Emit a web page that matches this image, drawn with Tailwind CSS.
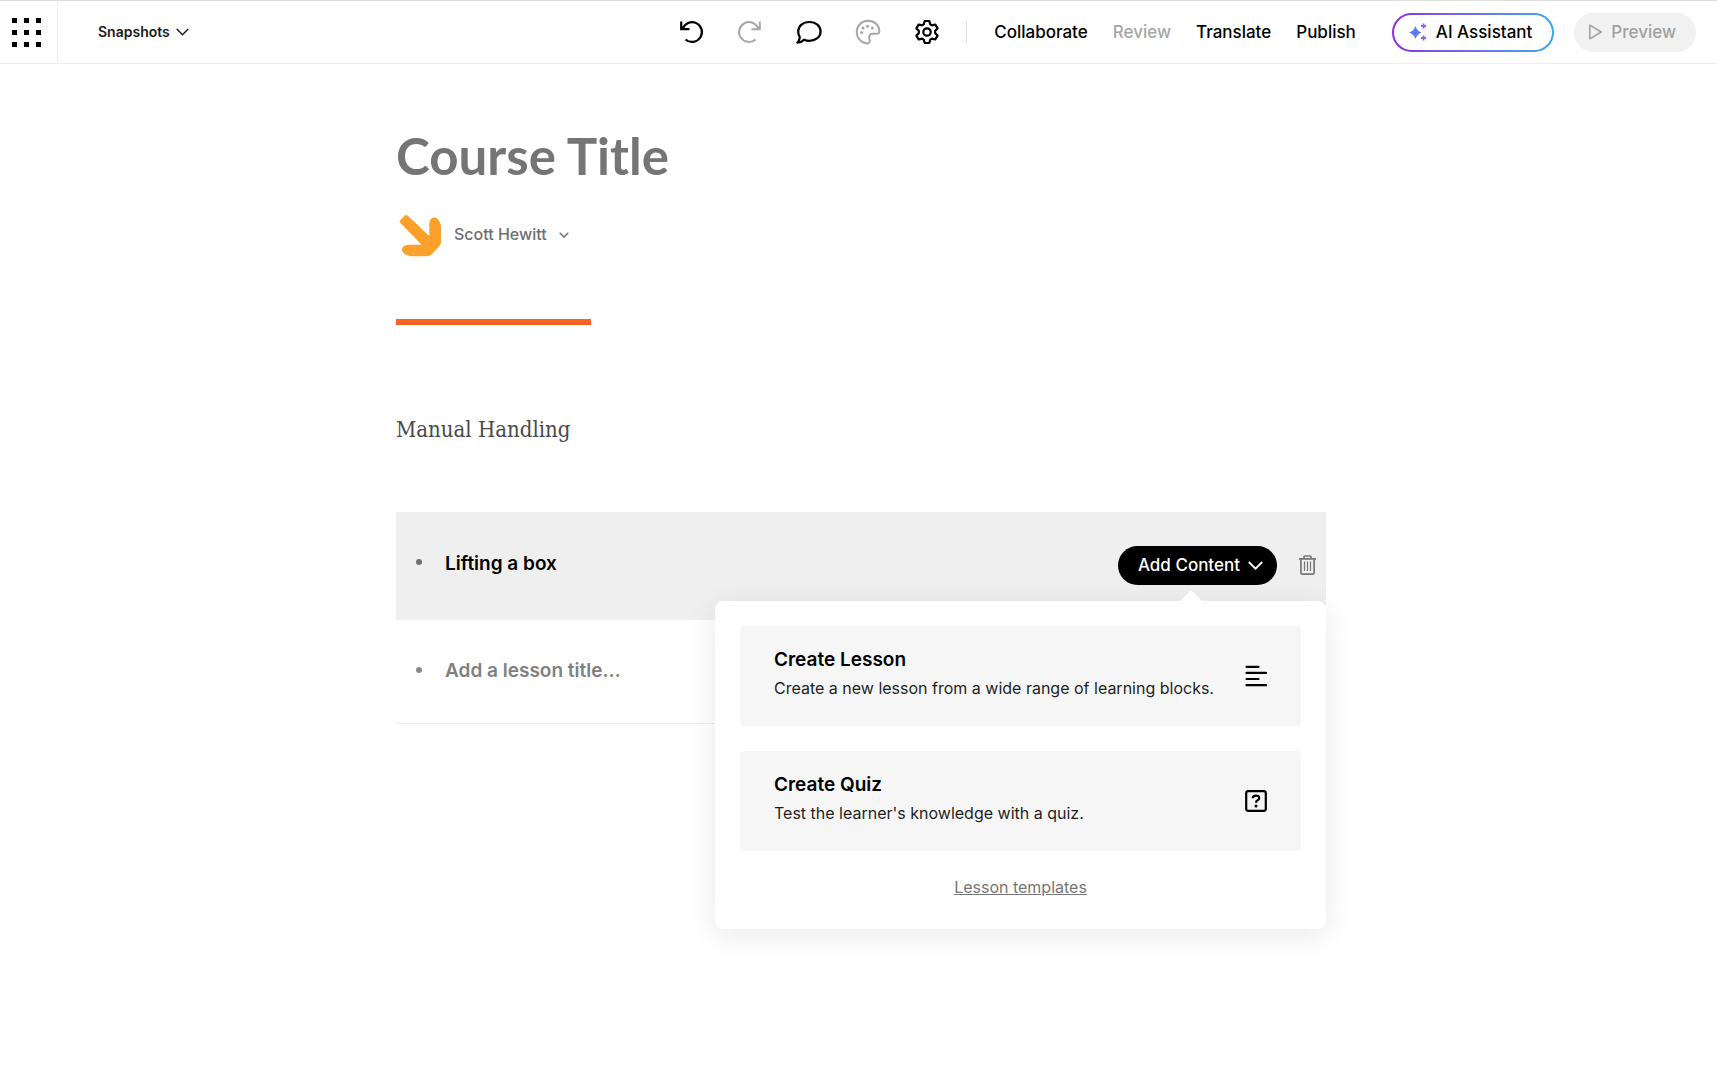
<!DOCTYPE html>
<html lang="en">
<head>
  <meta charset="UTF-8" />
  <meta name="viewport" content="width=device-width, initial-scale=1.0"/>
  <title>Course Title</title>
  <script src="https://cdn.jsdelivr.net/npm/@tailwindcss/browser@4"></script>
</head>
<body class="min-h-screen bg-white font-['Inter',sans-serif] text-black">
  <header class="flex h-16 items-center border-t border-b border-t-[#dcdcdc] border-b-[#ebebeb] pr-[21px]">
    <button type="button" aria-label="Apps" class="flex h-full w-[58px] shrink-0 items-center border-r border-[#ebebeb] pt-0.5 pl-3">
      <svg class="size-[30px]" viewBox="0 0 30 30" fill="#000" shape-rendering="crispEdges">
        <path d="M0 0h5v5H0zM12 0h5v5h-5zM24 0h5v5h-5zM0 12h5v5H0zM12 12h5v5h-5zM24 12h5v5h-5zM0 24h5v5H0zM12 24h5v5h-5zM24 24h5v5h-5z"/>
      </svg>
    </button>
    <button type="button" class="ml-10 flex items-center gap-1.5 text-sm font-semibold text-[#1a1a1a]">
      Snapshots
      <svg class="w-[13px]" viewBox="0 0 13 8" fill="none" stroke="currentColor" stroke-width="1.5"><path d="M.8 1l5.7 5.7L12.2 1"/></svg>
    </button>

    <div class="ml-auto flex items-center gap-[33px]">
      <button type="button" aria-label="Undo">
        <svg class="size-[26px]" viewBox="0 0 26 26" fill="none" stroke="currentColor" stroke-width="2.2"><path d="M3.200 2.500v7.700h8.200M4.600 10A9.900 9.900 0 1 1 7.500 20.500"/></svg>
      </button>
      <button type="button" aria-label="Redo" disabled class="text-[#a6a6a6]">
        <svg class="size-[26px]" viewBox="0 0 26 26" fill="none" stroke="currentColor" stroke-width="2"><path d="M22.800 2.500v7.700h-8.200M21.400 10A9.900 9.900 0 1 0 18.500 20.500"/></svg>
      </button>
      <button type="button" aria-label="Comments">
        <svg class="size-[26px]" viewBox="0 0 26 26" fill="none" stroke="currentColor" stroke-width="2.2" stroke-linejoin="round"><path d="M13.400 3c6.300 0 11.200 4 11.200 9.400s-4.900 9.400-11.200 9.400c-2 0-3.800-.4-5.400-1.100-1.800 1.900-4 2.900-6.600 3 1.500-1.600 2.300-3.400 2.400-5.600-1.100-1.600-1.600-3.400-1.600-5.700C2.200 7 7.100 3 13.400 3z"/></svg>
      </button>
      <button type="button" aria-label="Theme" disabled class="text-[#a6a6a6]">
        <svg class="size-[26px]" viewBox="0 0 26 26" fill="none" stroke="currentColor" stroke-width="2" stroke-linejoin="round"><path d="M13 1.700C6.700 1.700 1.700 6.700 1.700 13c0 5.500 3.900 10.300 9.100 11.300 2.700.5 4-.8 4-2.500 0-1.300-.6-2-.6-3.300 0-2.200 1.300-3.700 3.500-3.700h4c1.900 0 2.800-1 2.700-2.900C24 6 19.200 1.700 13 1.700z"/><g fill="currentColor" stroke="none"><circle cx="6.600" cy="13.400" r="1.500"/><circle cx="8" cy="8.900" r="1.500"/><circle cx="12.600" cy="7.200" r="1.500"/><circle cx="17.300" cy="8.900" r="1.500"/></g></svg>
      </button>
      <button type="button" aria-label="Settings">
        <svg class="size-[26px]" viewBox="0 0 26 26" fill="none" stroke="currentColor" stroke-width="2.200" stroke-linejoin="round"><path d="M10.700 2h4.600l.9 3.300 1.800 1.100 3.300-.9 2.300 3.900-2.400 2.400v2.400l2.400 2.400-2.300 3.900-3.300-.9-1.800 1.100-.9 3.300h-4.600l-.9-3.300L8 19.600l-3.300.9-2.300-3.900 2.400-2.400v-2.400L2.400 9.400l2.300-3.900 3.300.9 1.800-1.100z"/><circle cx="13" cy="13" r="3.700"/></svg>
      </button>
    </div>

    <nav class="ml-[26px] flex items-center text-[17px] font-medium">
      <span class="mr-[27px] h-6 w-px bg-[#e2e2e2]"></span>
      <div class="flex gap-[25px] pt-0.5">
        <button type="button">Collaborate</button>
        <button type="button" disabled class="text-[#a6a6a6]">Review</button>
        <button type="button">Translate</button>
        <button type="button">Publish</button>
      </div>
    </nav>

    <button type="button" class="ml-9 rounded-full bg-linear-to-r from-[#8a2be2] via-[#6a6fe8] to-[#35a7ec] p-0.5">
      <span class="flex h-[35px] items-center gap-[9px] rounded-full bg-white pr-5 pl-[15px] text-[17px] font-medium">
        <svg class="size-[18px]" viewBox="0 0 18 18">
          <path d="M6.500 3Q8 8 12.500 9.500 8 11 6.500 16 5 11 0 9.500 5 8 6.500 3z" fill="#5b7cf0"/>
          <path d="M14.500 .5v5M12 3h5M14.500 12.500v5M12 15h5" stroke="#8a63ea" stroke-width="1.800"/>
        </svg>
        <span class="pt-0.5">AI Assistant</span>
      </span>
    </button>
    <button type="button" disabled class="ml-5 flex h-[39px] items-center gap-[9px] rounded-full bg-[#f1f1f1] pr-5 pl-[15px] text-[17px] font-medium text-[#a0a0a0]">
      <svg class="h-4 w-[13px]" viewBox="0 0 13 16" fill="none" stroke="currentColor" stroke-width="1.500" stroke-linejoin="round"><path d="M.8 1.200v13.600L12.200 8z"/></svg>
      <span class="pt-0.5">Preview</span>
    </button>
  </header>

  <main class="pl-[5px]">
    <div class="mx-auto w-full max-w-[930px]">
      <input type="text" aria-label="Course title" placeholder="Course Title" class="mt-[59px] block h-[66px] w-full font-['Lato',sans-serif] text-[51px] font-bold outline-none placeholder:text-[#757575]">

      <button type="button" class="mt-[25px] flex items-center text-base font-medium text-[#6f6f6f]">
        <svg class="h-11 w-12" viewBox="0 0 48 44" fill="#faa02b"><path d="M4.300 8.800q-1.300-1.300 0-2.600l4.600-4.600q1.300-1.300 2.600 0L33.300 22V10.500C33.300 6 35.500 3.500 38.500 3.500 42 3.500 45 9 45 13v14c0 2.500-.5 4-2.500 6l-6.500 7c-2 1.800-3.500 2.300-6 2.300H17.500C12 42.300 6 39.500 6 35.800c0-3 2.500-4.800 6.500-5h13z"/></svg>
        <span class="ml-2.5 pb-1">Scott Hewitt</span>
        <svg class="mb-0.5 ml-3 w-2.5" viewBox="0 0 10 6" fill="none" stroke="currentColor" stroke-width="1.500"><path d="M.7.700L5 5 9.300.700"/></svg>
      </button>

      <div class="mt-[61px] h-1.5 w-[195px] bg-[#fa6423]"></div>

      <p class="mt-[87px] font-['DejaVu_Serif_Condensed','DejaVu_Serif',serif] text-[22px] leading-9 text-[#4a4a4a]">Manual Handling</p>

      <ul class="mt-16">
        <li class="relative flex h-[108px] items-center bg-[#efefef] pl-5">
          <span class="mb-2 size-1.5 rounded-full bg-[#707070]"></span>
          <input type="text" aria-label="Lesson title" value="Lifting a box" class="ml-[23px] min-w-0 flex-1 pb-1 text-[19px] font-semibold outline-none">
          <button type="button" class="mb-0.5 flex h-[39px] items-center gap-2 rounded-full bg-black pr-3.5 pl-5 text-[17px] font-medium text-white">
            <span class="pt-0.5">Add Content</span>
            <svg class="w-[15px]" viewBox="0 0 15 9" fill="none" stroke="currentColor" stroke-width="1.800"><path d="M.8 1l6.700 6.700L14.200 1"/></svg>
          </button>
          <button type="button" aria-label="Delete lesson" class="mr-2.5 mb-0.5 ml-[22px] text-[#777]">
            <svg class="h-5 w-[17px]" viewBox="0 0 17 20" fill="none" stroke="currentColor" stroke-width="1.700"><path d="M0 3.800h17M5 3.500V2q0-1 1-1h5q1 0 1 1v1.500M1.900 4v13.500q0 1.700 1.700 1.700h9.800q1.700 0 1.700-1.700V4"/><path stroke-width="1.200" d="M5.500 6.500v9.500M8.500 6.500v9.500M11.500 6.500v9.500"/></svg>
          </button>

          <!-- add content menu -->
          <div class="absolute top-[89px] right-0 z-10 w-[611px] rounded-lg bg-white px-[25px] pt-[25px] pb-[29px] shadow-[0_6px_30px_rgba(0,0,0,0.09)]">
            <svg class="absolute -top-[11px] right-[123px] h-3 w-6" viewBox="0 0 24 12" fill="#fff"><path d="M0 12L11 1q1-1 2 0l11 11z"/></svg>
            <div class="flex flex-col gap-[25px]">
              <button type="button" class="flex h-[100px] items-center justify-between rounded bg-[#f6f6f6] px-[34px] text-left">
                <span class="pb-1">
                  <span class="block text-[19px] leading-7 font-semibold">Create Lesson</span>
                  <span class="block text-base leading-7 text-[#1f1f1f]">Create a new lesson from a wide range of learning blocks.</span>
                </span>
                <svg class="size-[22px] shrink-0" viewBox="0 0 22 22" fill="none" stroke="#000" stroke-width="2.200" stroke-linecap="round"><path d="M1.500 1.800h12M1.500 7.900h19.500M1.500 14h12M1.500 20.200h19.500"/></svg>
              </button>
              <button type="button" class="flex h-[100px] items-center justify-between rounded bg-[#f6f6f6] px-[34px] text-left">
                <span class="pb-1">
                  <span class="block text-[19px] leading-7 font-semibold">Create Quiz</span>
                  <span class="block text-base leading-7 text-[#1f1f1f]">Test the learner's knowledge with a quiz.</span>
                </span>
                <svg class="size-[22px] shrink-0" viewBox="0 0 22 22" fill="none" stroke="#000" stroke-width="2.200"><rect x="1.200" y="1.200" width="19.600" height="19.600" rx="2"/><path d="M7.800 8.200q0-2.600 3.200-2.600t3.200 2.300q0 1.500-1.700 2.400-1.500.8-1.500 2.400"/><circle cx="11" cy="15.900" r="1.500" fill="#000" stroke="none"/></svg>
              </button>
            </div>
            <div class="mt-6 text-center text-base leading-[25px] text-[#757575]">
              <a href="#" class="underline">Lesson templates</a>
            </div>
          </div>
        </li>
        <li class="flex h-[104px] items-center border-b border-[#ebebeb] pl-5">
          <span class="mb-1 size-1.5 rounded-full bg-[#8a8a8a]"></span>
          <input type="text" aria-label="New lesson title" placeholder="Add a lesson title…" class="ml-[23px] min-w-0 flex-1 text-[19px] font-semibold outline-none placeholder:text-[#808080]">
        </li>
      </ul>
    </div>
  </main>
</body>
</html>
